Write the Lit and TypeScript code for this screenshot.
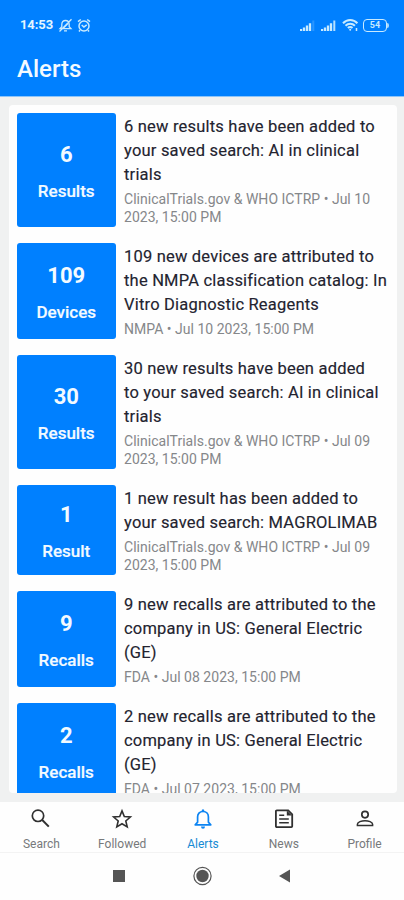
import { LitElement, html, css, svg } from "lit";
import { customElement, property } from "lit/decorators.js";

interface Alert {
  count: string;
  unit: string;
  title: string[];
  meta: string[];
}

const ALERTS: Alert[] = [
  { count: "6", unit: "Results", title: ["6 new results have been added to", "your saved search: AI in clinical", "trials"], meta: ["ClinicalTrials.gov & WHO ICTRP • Jul 10", "2023, 15:00 PM"] },
  { count: "109", unit: "Devices", title: ["109 new devices are attributed to", "the NMPA classification catalog: In", "Vitro Diagnostic Reagents"], meta: ["NMPA • Jul 10 2023, 15:00 PM"] },
  { count: "30", unit: "Results", title: ["30 new results have been added", "to your saved search: AI in clinical", "trials"], meta: ["ClinicalTrials.gov & WHO ICTRP • Jul 09", "2023, 15:00 PM"] },
  { count: "1", unit: "Result", title: ["1 new result has been added to", "your saved search: MAGROLIMAB"], meta: ["ClinicalTrials.gov & WHO ICTRP • Jul 09", "2023, 15:00 PM"] },
  { count: "9", unit: "Recalls", title: ["9 new recalls are attributed to the", "company in US: General Electric", "(GE)"], meta: ["FDA • Jul 08 2023, 15:00 PM"] },
  { count: "2", unit: "Recalls", title: ["2 new recalls are attributed to the", "company in US: General Electric", "(GE)"], meta: ["FDA • Jul 07 2023, 15:00 PM"] },
];

const TAB_ICONS = {
  Search: svg`<circle cx="9" cy="8.800" r="5.700" fill="none" stroke="currentColor" stroke-width="1.700"/><path d="M13 12.800l6.800 6.800" fill="none" stroke="currentColor" stroke-width="2"/>`,
  Followed: svg`<path d="M12 3.900l2.300 5.600 6.100.5-4.600 4 1.400 5.900-5.200-3.200-5.200 3.200L8.200 14l-4.600-4 6.100-.5z" fill="none" stroke="currentColor" stroke-width="1.600"/>`,
  Alerts: svg`<path d="M4.200 17.800h15.600l-2.400-2.600V10c0-3-1.800-5.500-5.400-5.500S6.600 7 6.600 10v5.200z" fill="none" stroke="currentColor" stroke-width="1.700" stroke-linejoin="round"/><path d="M10.600 4.200a1.400 2 0 0 1 2.800 0z" fill="currentColor"/><path d="M10 19.600h4a2 2.200 0 0 1-4 0z" fill="currentColor"/>`,
  News: svg`<path d="M4.800 3.400h11.400l4 4v11.900a.9.9 0 0 1-.9.9H4.800a.9.9 0 0 1-.9-.9V4.300a.9.9 0 0 1 .9-.9z" fill="none" stroke="currentColor" stroke-width="1.800"/><path d="M14.800 3.400v5.200h5.200z" fill="currentColor"/><path d="M7.200 8.200h5M7.200 12h9.600M7.200 15.800h9.600" stroke="currentColor" stroke-width="1.600"/>`,
  Profile: svg`<circle cx="12" cy="7.600" r="3.200" fill="none" stroke="currentColor" stroke-width="1.700"/><path d="M4.400 18.600v-1.300c0-2.300 4.200-3.600 7.600-3.600s7.600 1.300 7.600 3.600v1.300z" fill="none" stroke="currentColor" stroke-width="1.500"/>`,
};
type TabName = keyof typeof TAB_ICONS;

@customElement("status-bar")
class StatusBar extends LitElement {
  static styles = css`
    :host { display: flex; height: 50px; padding: 0 15px 0 20px; box-sizing: border-box; align-items: center; color: #c8eaff; }
    .time { font: 700 13px/16px Roboto, sans-serif; letter-spacing: -0.100px; margin-right: 5px; color: #e4f6ff; }
    .spacer { flex: 1; }
    svg { display: block; flex: none; }
    .alarm { margin-left: 4px; }
    .signal { margin-right: 6px; }
    .battery { display: flex; align-items: center; margin-left: 4px; }
    .cell { width: 24px; height: 13px; box-sizing: border-box; border: 1.5px solid #c8eaff; border-radius: 4px; font: 700 9px/11px Roboto, sans-serif; text-align: center; }
    .tip { width: 2px; height: 5px; background: #a5d8ff; border-radius: 0 2px 2px 0; }
  `;

  render() {
    const bars = (faint: boolean) => svg`
      <path d="M1 12v-2M4 12V8.500M7 12V6.500M10 12V4.200" stroke="currentColor" stroke-width="2.300"/>
      <path d="M13.300 12V1.500" stroke="currentColor" stroke-width="2" opacity=${faint ? 0.2 : 0.9}/>`;
    return html`
      <span class="time">14:53</span>
      <svg width="15" height="15" viewBox="0 0 15 15" fill="none" stroke="currentColor" stroke-width="1.300">
        <path d="M2 10.700h11l-1.800-2V6.500C11.200 4 9.800 2.500 7.500 2.500S3.800 4 3.800 6.500v2.200zM6 12.800h3M1.500 13.500l12-12.300M6 9.500l4-4"/>
      </svg>
      <svg class="alarm" width="14" height="15" viewBox="0 0 14 15" fill="none" stroke="currentColor" stroke-width="1.500">
        <circle cx="7" cy="8" r="5"/><path d="M1 3.700l2.800-2.200M13 3.700l-2.800-2.200M4.700 7l2.200 2 2.800-2.200M3 12.200l-1 1.300M11 12.200l1 1.300"/>
      </svg>
      <span class="spacer"></span>
      <svg class="signal" width="15" height="13" viewBox="0 0 15 13">${bars(true)}</svg>
      <svg class="signal" width="15" height="13" viewBox="0 0 15 13">${bars(false)}</svg>
      <svg width="17" height="14" viewBox="0 0 17 14" fill="none" stroke="currentColor" stroke-width="2">
        <path d="M1 5.200c4-4.300 10.400-4.300 14.400 0M3.500 7.700c2.700-2.700 6.700-2.700 9.400 0M5.900 10c1.300-1.300 3.300-1.300 4.600 0"/>
        <circle cx="8.200" cy="11.800" r="1" fill="currentColor" stroke="none"/><path d="M14.500 10v3" stroke-width="1.500"/>
      </svg>
      <div class="battery"><div class="cell">54</div><div class="tip"></div></div>
    `;
  }
}

@customElement("alert-row")
class AlertRow extends LitElement {
  @property({ attribute: false }) alert!: Alert;

  static styles = css`
    :host { display: flex; gap: 8.500px; flex: none; }
    .tile { width: 98.500px; flex: none; border-radius: 3px; background: #0080ff; color: #f3faff; display: flex; flex-direction: column; align-items: center; justify-content: center; gap: 12px; padding-top: 4px; box-sizing: border-box; }
    .count { font-size: 22px; line-height: 26px; font-weight: 700; }
    .unit { font-size: 17px; line-height: 22px; font-weight: 500; -webkit-text-stroke: 0.200px #f3faff; }
    .text { white-space: nowrap; padding-bottom: 0.500px; padding-top: 2px; }
    .title { font-size: 16.500px; line-height: 24px; letter-spacing: 0.200px; color: #23232f; -webkit-text-stroke: 0.150px #23232f; }
    .meta { margin-top: 3px; font-size: 14px; line-height: 18px; letter-spacing: 0.020px; color: #85878a; }
  `;

  render() {
    const { count, unit, title, meta } = this.alert;
    return html`
      <div class="tile"><div class="count">${count}</div><div class="unit">${unit}</div></div>
      <div class="text">
        <div class="title">${title.map((line) => html`<div>${line}</div>`)}</div>
        <div class="meta">${meta.map((line) => html`<div>${line}</div>`)}</div>
      </div>
    `;
  }
}

@customElement("tab-bar")
class TabBar extends LitElement {
  static styles = css`
    :host { display: grid; grid-template-columns: repeat(5, 80.800px); height: 51px; padding-left: 1px; box-sizing: border-box; background: #fefefe; border-bottom: 1px solid #f3f3f3; }
    .tab { display: flex; flex-direction: column; align-items: center; padding-top: 5px; color: #303030; }
    .tab svg { width: 24px; height: 24px; display: block; }
    .label { margin-top: 6px; font-size: 12px; line-height: 14px; color: #77797b; }
    .active { color: #0c84f2; }
    .active .label { color: #168bd4; }
  `;

  render() {
    return (Object.keys(TAB_ICONS) as TabName[]).map((name) => html`
      <div class="tab ${name === "Alerts" ? "active" : ""}">
        <svg viewBox="0 0 24 24">${TAB_ICONS[name]}</svg>
        <span class="label">${name}</span>
      </div>
    `);
  }
}

@customElement("app-root")
class AppRoot extends LitElement {
  static styles = css`
    :host { display: flex; flex-direction: column; height: 900px; overflow: hidden; background: #f0f1f1; font-family: Roboto, sans-serif; }
    .header { height: 96px; flex: none; background: #0080ff; border-bottom: 1px solid #8dc5fa; }
    .heading { margin: 0; padding: 4px 0 0 17px; font-size: 24px; line-height: 30px; font-weight: 500; color: #f3faff; }
    .list { margin: 8px 7px 0 9px; height: 688px; flex: none; overflow: hidden; background: #fefefe; border-radius: 4px; padding: 8px 0 0 8px; box-sizing: border-box; display: flex; flex-direction: column; gap: 16.500px; }
    tab-bar { margin-top: 9px; flex: none; }
    .system { flex: 1; background: #fefefe; display: flex; justify-content: center; align-items: flex-start; padding-top: 13px; gap: 63px; }
    .system svg { display: block; width: 20px; height: 20px; color: #555; }
  `;

  render() {
    return html`
      <div class="header"><status-bar></status-bar><h1 class="heading">Alerts</h1></div>
      <div class="list">${ALERTS.map((alert) => html`<alert-row .alert=${alert}></alert-row>`)}</div>
      <tab-bar></tab-bar>
      <div class="system">
        <svg viewBox="0 0 20 20"><rect x="4" y="4" width="12" height="12" fill="currentColor"/></svg>
        <svg viewBox="0 0 20 20"><circle cx="10.500" cy="10" r="8.600" fill="none" stroke="currentColor" stroke-width="1.200"/><circle cx="10.500" cy="10" r="6.200" fill="currentColor"/></svg>
        <svg viewBox="0 0 20 20"><path d="M15 3.500v13L4 10z" fill="currentColor"/></svg>
      </div>
    `;
  }
}
